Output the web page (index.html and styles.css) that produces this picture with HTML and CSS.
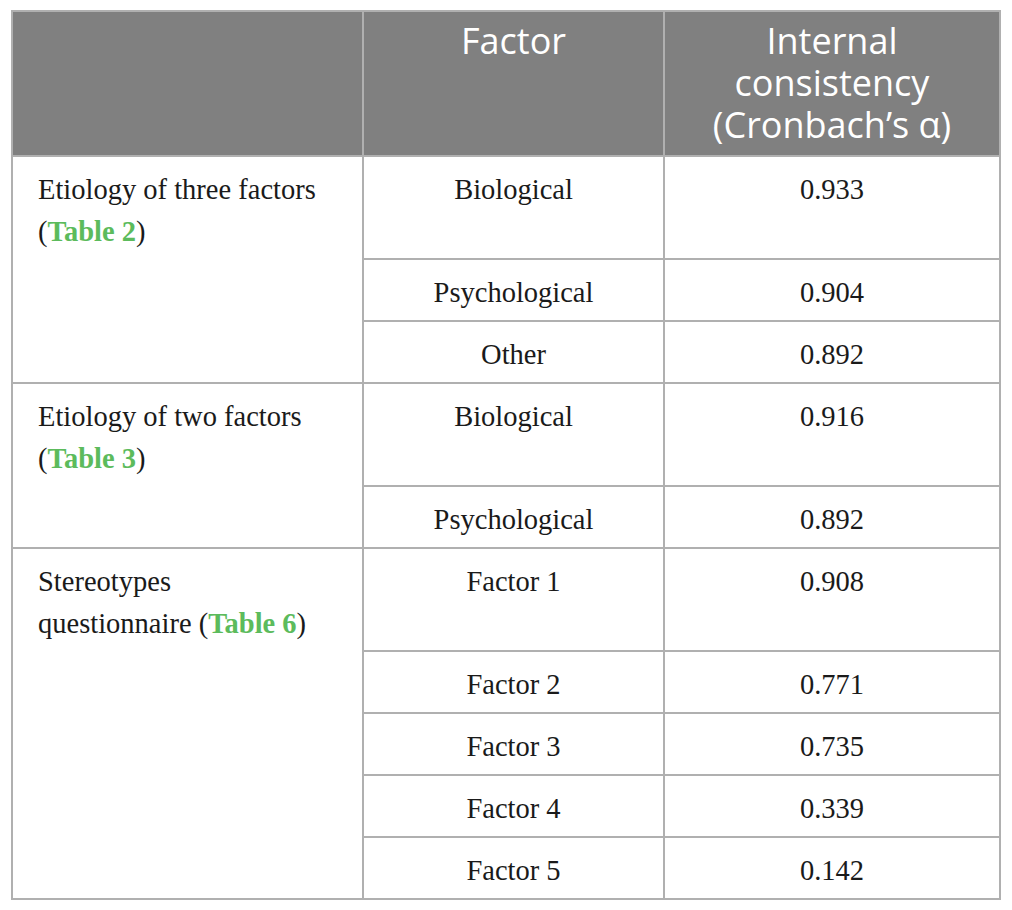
FILE: index.html
```html
<!DOCTYPE html>
<html>
<head>
<meta charset="utf-8">
<link rel="stylesheet" href="styles.css">
</head>
<body>
<table class="data">
  <colgroup>
    <col class="c1"><col class="c2"><col class="c3">
  </colgroup>
  <thead>
    <tr>
      <th></th>
      <th>Factor</th>
      <th>Internal consistency (Cronbach’s α)</th>
    </tr>
  </thead>
  <tbody>
    <tr class="grp">
      <td class="lbl">Etiology of three factors (<a class="ref">Table 2</a>)</td>
      <td>Biological</td><td>0.933</td>
    </tr>
    <tr>
      <td class="lbl cont"></td><td>Psychological</td><td>0.904</td>
    </tr>
    <tr>
      <td class="lbl cont"></td><td>Other</td><td>0.892</td>
    </tr>
    <tr class="grp">
      <td class="lbl">Etiology of two factors (<a class="ref">Table 3</a>)</td>
      <td>Biological</td><td>0.916</td>
    </tr>
    <tr>
      <td class="lbl cont"></td><td>Psychological</td><td>0.892</td>
    </tr>
    <tr class="grp">
      <td class="lbl">Stereotypes questionnaire (<a class="ref">Table 6</a>)</td>
      <td>Factor 1</td><td>0.908</td>
    </tr>
    <tr>
      <td class="lbl cont"></td><td>Factor 2</td><td>0.771</td>
    </tr>
    <tr>
      <td class="lbl cont"></td><td>Factor 3</td><td>0.735</td>
    </tr>
    <tr>
      <td class="lbl cont"></td><td>Factor 4</td><td>0.339</td>
    </tr>
    <tr>
      <td class="lbl cont"></td><td>Factor 5</td><td>0.142</td>
    </tr>
  </tbody>
</table>
</body>
</html>
```

FILE: styles.css
```css
html, body {
  margin: 0;
  padding: 0;
  background: #ffffff;
}
body {
  padding: 10px 0 0 11px;
}
.data {
  border-collapse: collapse;
  table-layout: fixed;
  width: 988px;
  border: 2px solid #b0b0b0;
}
.c1 { width: 351px; }
.c2 { width: 301px; }
.c3 { width: 336px; }
.data th {
  background: #808080;
  color: #ffffff;
  font-family: "Open Sans", "DejaVu Sans", sans-serif;
  font-weight: 400;
  font-size: 36px;
  line-height: 42px;
  text-align: center;
  vertical-align: top;
  padding: 8px 20px 9px;
  border: 2px solid #b0b0b0;
}
.data td {
  font-family: "Liberation Serif", "Times New Roman", serif;
  font-size: 28.5px;
  line-height: 42px;
  color: #1a1a1a;
  text-align: center;
  vertical-align: top;
  padding: 12px 20px 6px;
  border: 2px solid #b0b0b0;
}
.data td.lbl {
  text-align: left;
  padding-left: 25px;
  padding-right: 45px;
}
.data td.cont {
  border-top: none;
  border-bottom: none;
}
.data tr.grp td.lbl {
  border-bottom: none;
}
.ref {
  color: #5cbb5c;
  font-weight: 700;
  text-decoration: none;
}
```
